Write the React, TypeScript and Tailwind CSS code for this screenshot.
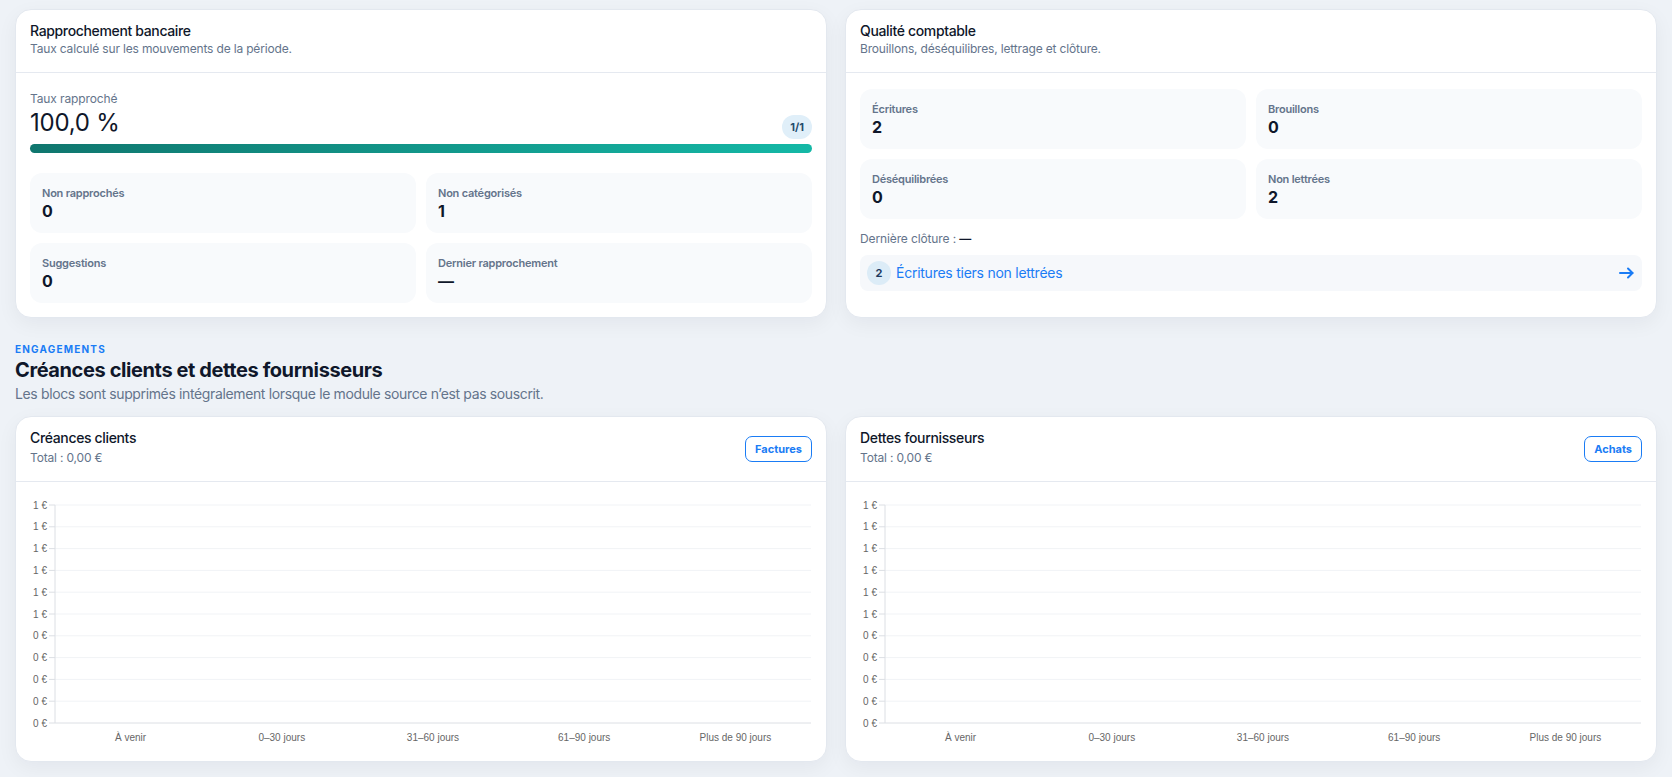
// Tableau de bord comptable — rapprochement, qualité et balances âgées.

const BUCKETS = ["À venir", "0–30 jours", "31–60 jours", "61–90 jours", "Plus de 90 jours"];
const Y_TICKS = ["1 €", "1 €", "1 €", "1 €", "1 €", "1 €", "0 €", "0 €", "0 €", "0 €", "0 €"];

function Card({ title, sub, action, children, bodyClass }: {
  title: string; sub: string; action?: React.ReactNode; children: React.ReactNode; bodyClass?: string;
}) {
  return (
    <div className="flex flex-col rounded-2xl border border-[#e3e8ef] bg-white shadow-[0_6px_20px_rgba(15,23,42,0.05)]">
      <div className="flex items-start justify-between gap-3 border-b border-[#e5e9f0] px-[14px] pt-[11px] pb-[15px]">
        <div>
          <div className="text-[14px] leading-5 font-medium tracking-[-0.025em] text-[#0f172a]">{title}</div>
          <div className={`text-[12px] leading-4 tracking-[-0.014em] text-[#64748b] ${action ? "mt-[2px]" : ""}`}>{sub}</div>
        </div>
        {action}
      </div>
      <div className={bodyClass ?? "px-[14px] pt-4 pb-[14px]"}>{children}</div>
    </div>
  );
}

function Stat({ label, value }: { label: string; value: string }) {
  return (
    <div className="rounded-xl bg-[#f8fafc] p-3">
      <div className="text-[11px] leading-4 font-semibold tracking-[-0.02em] text-[#64748b]">{label}</div>
      <div className="text-[16px] leading-5 font-bold text-[#0f172a]">{value}</div>
    </div>
  );
}

function OutlineButton({ label }: { label: string }) {
  return (
    <button className="mt-2 h-[26px] rounded-[7px] border-[1.5px] border-[#1a7cf5] bg-white px-[9px] text-[11px] font-bold text-[#1a7cf5]">
      {label}
    </button>
  );
}

// Graphe vide des créances/dettes par ancienneté (axes + grille seulement).
function AgingChart() {
  const W = 782, left = 25, right = 781, top = 8, bottom = 226;
  const step = (bottom - top) / (Y_TICKS.length - 1);
  const col = (right - left) / BUCKETS.length;
  return (
    <svg viewBox={`0 0 ${W} 250`} className="block w-full h-[250px]" style={{ fontFamily: "'Liberation Sans', Arial, sans-serif" }}>
      {Y_TICKS.map((t, i) => {
        const y = top + i * step;
        return (
          <g key={i}>
            {i < Y_TICKS.length - 1 && <line x1={left} x2={right} y1={y} y2={y} stroke="#f1f3f6" />}
            <line x1={left - 6} x2={left} y1={y} y2={y} stroke="#dcdfe4" />
            <text x={left - 8} y={y + 3.5} textAnchor="end" fontSize="10" fill="#666">{t}</text>
          </g>
        );
      })}
      <line x1={left} x2={left} y1={top} y2={bottom} stroke="#dcdfe4" />
      <line x1={left} x2={right} y1={bottom} y2={bottom} stroke="#dcdfe4" />
      {BUCKETS.map((b, i) => (
        <text key={b} x={left + col * (i + 0.5)} y={bottom + 18} textAnchor="middle" fontSize="10" fill="#666">{b}</text>
      ))}
    </svg>
  );
}

export default function App() {
  return (
    <div className="min-h-screen bg-[#eef2f7] px-[15px] pt-[9px] pb-[15px] font-['Inter',sans-serif]">
      <div className="grid grid-cols-2 gap-[18px]">
        <Card title="Rapprochement bancaire" sub="Taux calculé sur les mouvements de la période." bodyClass="px-[14px] pt-[18px] pb-[14px]">
          <div className="flex items-end justify-between">
            <div>
              <div className="text-[12px] leading-4 tracking-[-0.01em] text-[#64748b]">Taux rapproché</div>
              <div className="text-[24px] leading-8 tracking-[-0.01em] text-[#0f172a]">100,0 %</div>
            </div>
            <span className="flex h-6 items-center rounded-full bg-[#e0eff9] px-2 text-[11px] font-bold text-[#1f4b6e]">1/1</span>
          </div>
          <div className="mt-[5px] h-[9px] rounded-full bg-gradient-to-r from-[#0f766e] to-[#14b8a6]" />
          <div className="mt-5 grid grid-cols-2 gap-[10px]">
            <Stat label="Non rapprochés" value="0" />
            <Stat label="Non catégorisés" value="1" />
            <Stat label="Suggestions" value="0" />
            <Stat label="Dernier rapprochement" value="—" />
          </div>
        </Card>

        <Card title="Qualité comptable" sub="Brouillons, déséquilibres, lettrage et clôture.">
          <div className="grid grid-cols-2 gap-[10px]">
            <Stat label="Écritures" value="2" />
            <Stat label="Brouillons" value="0" />
            <Stat label="Déséquilibrées" value="0" />
            <Stat label="Non lettrées" value="2" />
          </div>
          <div className="mt-3 text-[12px] leading-4 tracking-[-0.01em] text-[#64748b]">
            Dernière clôture : <span className="font-semibold text-[#0f172a]">—</span>
          </div>
          <a className="mt-2 flex items-center gap-[5px] rounded-lg bg-[#f6f8fb] py-1.5 pr-2 pl-[7px] text-[#1a7cf5]">
            <span className="flex h-6 w-6 items-center justify-center rounded-full bg-[#dcecf7] text-[11px] font-bold text-[#1e3a5f]">2</span>
            <span className="flex-1 text-[14px] leading-5 tracking-[-0.018em]">Écritures tiers non lettrées</span>
            <svg width="15" height="12" viewBox="0 0 15 12" fill="none" stroke="currentColor" strokeWidth="2" strokeLinecap="round" strokeLinejoin="round">
              <path d="M1 6h12.5" />
              <path d="M9 1.5 13.5 6 9 10.5" />
            </svg>
          </a>
        </Card>
      </div>

      <div className="mt-6">
        <div className="text-[10px] leading-[14px] font-bold tracking-[0.12em] text-[#1a7cf5]">ENGAGEMENTS</div>
        <div className="text-[20px] leading-7 font-bold tracking-[-0.02em] text-[#0f172a]">Créances clients et dettes fournisseurs</div>
        <div className="text-[14px] leading-5 tracking-[-0.026em] text-[#64748b]">Les blocs sont supprimés intégralement lorsque le module source n’est pas souscrit.</div>
      </div>

      <div className="mt-3 grid grid-cols-2 gap-[18px]">
        <Card title="Créances clients" sub="Total : 0,00 €" action={<OutlineButton label="Factures" />} bodyClass="px-[14px] pt-[15px] pb-[14px]">
          <AgingChart />
        </Card>
        <Card title="Dettes fournisseurs" sub="Total : 0,00 €" action={<OutlineButton label="Achats" />} bodyClass="px-[14px] pt-[15px] pb-[14px]">
          <AgingChart />
        </Card>
      </div>
    </div>
  );
}
